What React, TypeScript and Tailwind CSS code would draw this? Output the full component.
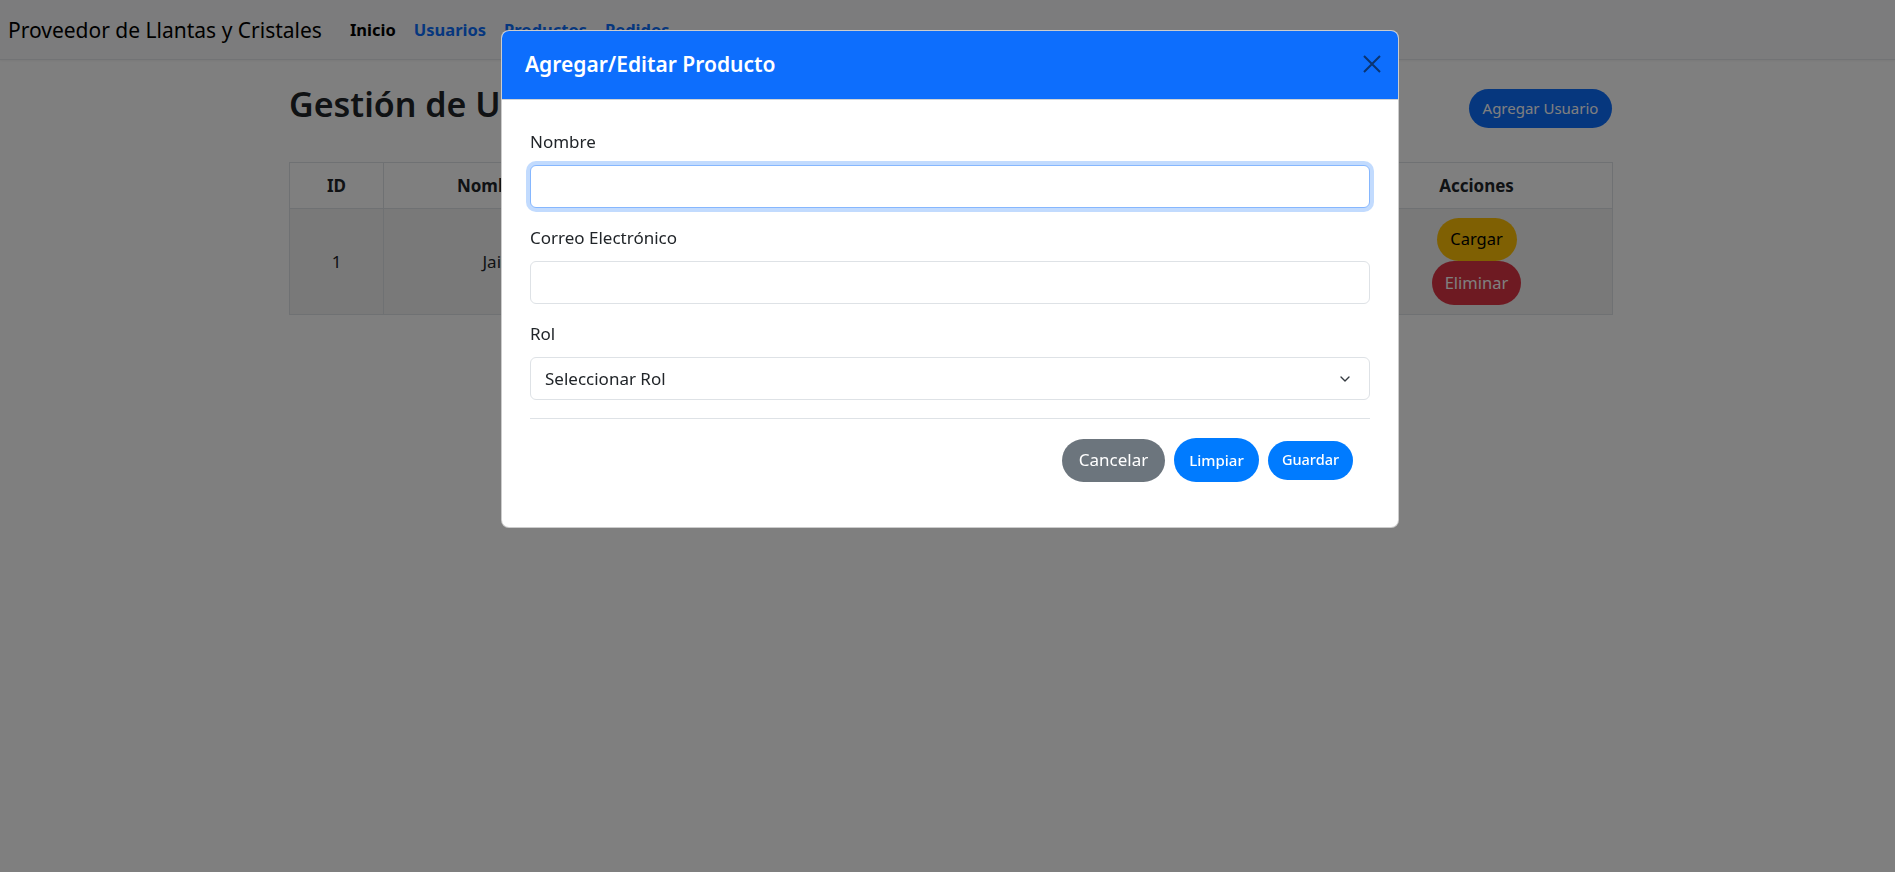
import { ChevronDown } from 'lucide-react'

const font = "font-['Noto_Sans','Open_Sans',Arial,sans-serif]"

function Navbar() {
  return (
    <nav className="flex h-[60px] items-center border-b border-[#e5e7eb] bg-[#f8f9fa] pl-[8px] shadow-[0_1px_2px_rgba(0,0,0,0.05)]">
      <span className="mr-[28px] text-[21px] leading-[30px] text-black">Proveedor de Llantas y Cristales</span>
      <div className="flex items-center gap-[18px] text-[16.5px] font-bold leading-[24px]">
        <span className="text-black">Inicio</span>
        <span className="text-[#0d6efd]">Usuarios</span>
        <span className="text-[#0d6efd]">Productos</span>
        <span className="text-[#0d6efd]">Pedidos</span>
      </div>
    </nav>
  )
}

function UsersTable() {
  return (
    <table className="w-[1323px] table-fixed border-collapse text-[17px] text-[#212529]">
      <colgroup>
        <col className="w-[94px]" />
        <col className="w-[216px]" />
        <col className="w-[441px]" />
        <col className="w-[300px]" />
        <col className="w-[272px]" />
      </colgroup>
      <thead>
        <tr className="h-[46px] bg-white">
          <th className="border border-[#dee2e6] text-center font-bold">ID</th>
          <th className="border border-[#dee2e6] text-center font-bold">Nombre</th>
          <th className="border border-[#dee2e6] text-center font-bold">Correo</th>
          <th className="border border-[#dee2e6] text-center font-bold">Rol</th>
          <th className="border border-[#dee2e6] text-center font-bold">Acciones</th>
        </tr>
      </thead>
      <tbody>
        <tr className="h-[106px] bg-[#f2f2f2]">
          <td className="border border-[#dee2e6] text-center">1</td>
          <td className="border border-[#dee2e6] pl-[26px] text-center">Jaime</td>
          <td className="border border-[#dee2e6] text-center">jaime@correo.com</td>
          <td className="border border-[#dee2e6] text-center">Administrador</td>
          <td className="border border-[#dee2e6]">
            <div className="flex flex-col items-center">
              <button className="h-[43px] w-[80px] rounded-full bg-[#ffc107] text-[16.5px] text-black">Cargar</button>
              <button className="h-[44px] w-[89px] rounded-full bg-[#dc3545] text-[16.5px] text-white">Eliminar</button>
            </div>
          </td>
        </tr>
      </tbody>
    </table>
  )
}

function Field({ label, focused, children }: { label: string; focused?: boolean; children?: React.ReactNode }) {
  return (
    <div className="mb-[18px]">
      <label className="mb-[11px] block text-[17px] leading-[24px] text-[#212529]">{label}</label>
      {children ?? (
        <div
          className={
            focused
              ? 'h-[43px] rounded-[6px] border border-[#86b7fe] bg-white shadow-[0_0_0_4px_rgba(13,110,253,0.25)]'
              : 'h-[43px] rounded-[6px] border border-[#dee2e6] bg-white'
          }
        />
      )}
    </div>
  )
}

function ProductModal() {
  return (
    <div className="fixed inset-0 pt-[30px]">
      <div className="ml-[501px] w-[898px] overflow-hidden rounded-[8px] border border-black/20 bg-white">
        <div className="flex h-[69px] items-center justify-between border-b border-[#cfd2d6] bg-[#0d6efd] pl-[23px] pr-[17px]">
          <h5 className="text-[21px] font-semibold text-white">Agregar/Editar Producto</h5>
          <svg width="18" height="18" viewBox="0 0 18 18" className="mb-[2px]">
            <path d="M1 1L17 17M17 1L1 17" stroke="#0b3470" strokeWidth="2" />
          </svg>
        </div>
        <div className="px-[28px] pb-[45px] pt-[30px]">
          <Field label="Nombre" focused />
          <Field label="Correo Electrónico" />
          <Field label="Rol">
            <div className="flex h-[43px] items-center justify-between rounded-[6px] border border-[#dee2e6] bg-white pl-[14px] pr-[16px]">
              <span className="text-[17px] text-[#212529]">Seleccionar Rol</span>
              <ChevronDown size={16} strokeWidth={2} className="text-[#343a40]" />
            </div>
          </Field>
          <div className="h-px bg-[#dee2e6]" />
          <div className="mt-[19px] flex items-center justify-end gap-[9px] pr-[17px]">
            <button className="h-[43px] w-[103px] rounded-full bg-[#6c757d] text-[17px] text-white">Cancelar</button>
            <button className="h-[44px] w-[85px] rounded-full bg-[#007bff] text-[15px] font-medium text-white">Limpiar</button>
            <button className="h-[39px] w-[85px] rounded-full bg-[#007bff] text-[14.5px] font-medium text-white">Guardar</button>
          </div>
        </div>
      </div>
    </div>
  )
}

export default function App() {
  return (
    <div className={`relative min-h-screen bg-white ${font}`}>
      <Navbar />
      <main className="ml-[289px] w-[1323px] pt-[25px]">
        <div className="mb-[34px] flex items-start justify-between">
          <h2 className="text-[34px] font-semibold leading-[38px] text-[#212529]">Gestión de Usuarios</h2>
          <button className="mt-[4px] h-[39px] w-[143px] rounded-full bg-[#0d6efd] text-[15px] text-white">Agregar Usuario</button>
        </div>
        <UsersTable />
      </main>

      {/* fondo del modal */}
      <div className="fixed inset-0 bg-black/50" />
      <ProductModal />
    </div>
  )
}
